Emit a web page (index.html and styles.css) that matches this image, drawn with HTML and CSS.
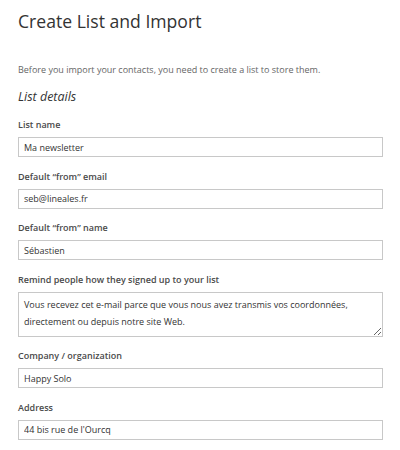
FILE: index.html
```html
<!DOCTYPE html>
<html lang="en">
<head>
  <meta charset="UTF-8" />
  <title>Create List and Import</title>
  <link rel="stylesheet" href="styles.css">
</head>
<body>
  <div class="page">
    <h1 class="page-title">Create List and Import</h1>

    <p class="intro">Before you import your contacts, you need to create a list to store them.</p>

    <h2 class="section-title">List details</h2>

    <form class="list-form">
      <div class="field">
        <label for="listName">List name</label>
        <input id="listName" type="text" value="Ma newsletter">
      </div>

      <div class="field">
        <label for="fromEmail">Default “from” email</label>
        <input id="fromEmail" type="text" value="seb@lineales.fr">
      </div>

      <div class="field">
        <label for="fromName">Default “from” name</label>
        <input id="fromName" type="text" value="Sébastien">
      </div>

      <div class="field">
        <label for="remind">Remind people how they signed up to your list</label>
        <textarea id="remind">Vous recevez cet e-mail parce que vous nous avez transmis vos coordonnées, directement ou depuis notre site Web.</textarea>
      </div>

      <div class="field">
        <label for="company">Company / organization</label>
        <input id="company" type="text" value="Happy Solo">
      </div>

      <div class="field">
        <label for="address">Address</label>
        <input id="address" type="text" value="44 bis rue de l'Ourcq">
      </div>
    </form>
  </div>
</body>
</html>
```

FILE: styles.css
```css
body {
  margin: 0;
  background: #fff;
  font-family: 'Open Sans', sans-serif;
  color: #444;
}

.page {
  padding: 8px 17px 0 18px;
}

.page-title {
  margin: 0;
  font-size: 17.6px;
  font-weight: 400;
  color: #333;
  line-height: 26px;
}

.intro {
  margin: 29px 0 0;
  font-size: 9px;
  line-height: 14px;
  color: #666;
}

.section-title {
  margin: 11px 0 0;
  font-size: 12.5px;
  font-style: italic;
  font-weight: 400;
  color: #333;
  line-height: 18px;
}

.list-form {
  display: flex;
  flex-direction: column;
  gap: 12.5px;
  margin-top: 12px;
}

.field {
  display: flex;
  flex-direction: column;
  gap: 5px;
}

.field label {
  font-size: 9px;
  font-weight: 600;
  color: #4a4a4a;
  line-height: 14px;
}

.field input,
.field textarea {
  box-sizing: border-box;
  width: 100%;
  margin: 0;
  border: 1px solid #c8c8c8;
  border-radius: 0;
  padding: 0 5px;
  font-family: 'Open Sans', sans-serif;
  font-size: 9px;
  color: #333;
  background: #fff;
}

.field input {
  height: 20px;
}

.field textarea {
  height: 45px;
  padding: 3px 5px;
  line-height: 17px;
  resize: vertical;
}
```
